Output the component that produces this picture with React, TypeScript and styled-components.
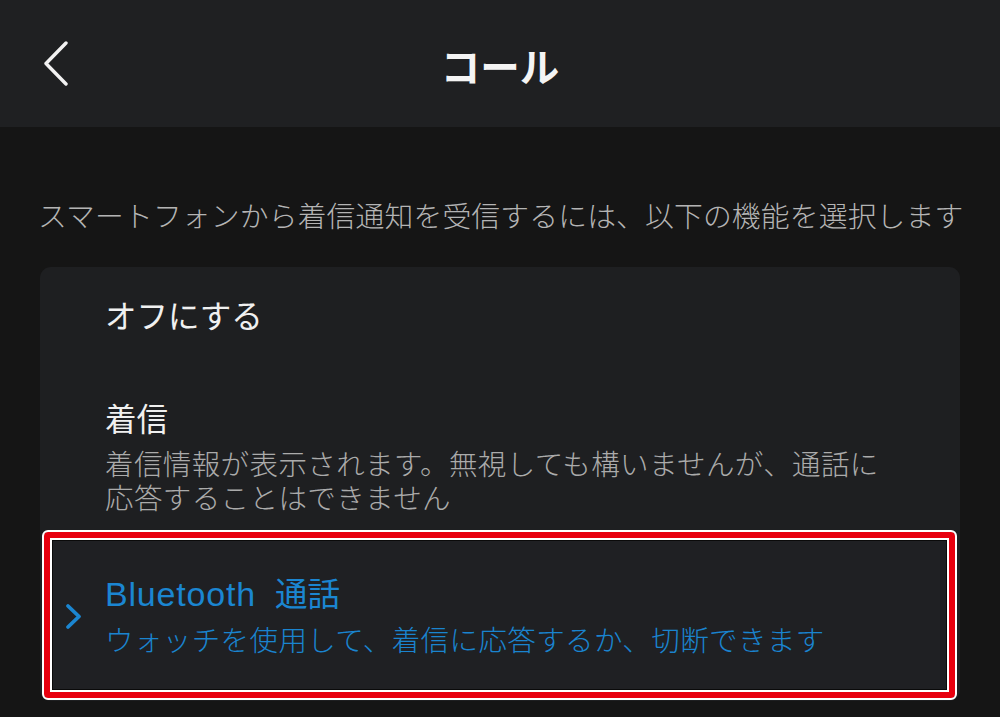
import React from "react";
import styled, { createGlobalStyle } from "styled-components";

const Global = createGlobalStyle`
  html, body { margin: 0; padding: 0; background: #151515; }
  body {
    font-family: "Noto Sans CJK JP", "Noto Sans", sans-serif;
    color: #f2f2f2;
    overflow: hidden;
    width: 1000px;
    height: 717px;
  }
`;

const Page = styled.div`
  width: 1000px;
  height: 717px;
  background: #151515;
  display: flex;
  flex-direction: column;
`;

const Header = styled.header`
  height: 127px;
  background: #1f2022;
  display: grid;
  grid-template-columns: 1fr auto 1fr;
  align-items: center;
`;

const BackButton = styled.button`
  justify-self: start;
  margin-left: 38px;
  padding: 0;
  background: none;
  border: none;
  width: 36px;
  height: 50px;
  display: flex;
  align-items: center;
  justify-content: center;
`;

const Title = styled.h1`
  margin: 0;
  font-size: 39.5px;
  font-weight: 700;
  color: #f4f4f4;
  line-height: 1;
  padding-top: 2px;
`;

const Main = styled.main`
  padding: 67px 40px 0 40px;
  display: flex;
  flex-direction: column;
`;

const Intro = styled.p`
  margin: 0 0 0 -2px;
  font-size: 28.8px;
  font-weight: 300;
  line-height: 42px;
  color: #b4b4b4;
  white-space: nowrap;
  letter-spacing: 0.15px;
`;

const Card = styled.section`
  margin-top: 31px;
  background: #1e1f21;
  border-radius: 11px;
  padding: 22px 3px 1px 2px;
  display: flex;
  flex-direction: column;
`;

const Option = styled.div<{ $gap?: number }>`
  padding-left: 63px;
  margin-bottom: ${(p) => p.$gap ?? 0}px;
  display: flex;
  flex-direction: column;
`;

const OptionTitle = styled.div<{ $spaced?: boolean }>`
  font-size: 31.5px;
  line-height: 50px;
  color: #f0f0f0;
  margin-bottom: ${(p) => (p.$spaced ? 4 : 0)}px;
`;

const BlueTitle = styled.div`
  font-size: 32.5px;
  line-height: 50px;
  color: #1b86d1;
  margin-bottom: 3px;
  display: flex;
  align-items: baseline;
`;

const Latin = styled.span`
  font-family: "Liberation Sans", sans-serif;
  font-size: 34px;
  letter-spacing: 0.8px;
  margin-right: 19px;
`;

const OptionDesc = styled.div<{ $blue?: boolean }>`
  font-size: 28.5px;
  font-weight: 300;
  line-height: 34px;
  color: ${(p) => (p.$blue ? "#1a84cf" : "#ababab")};
  letter-spacing: 0.4px;
`;

const DescLine = styled.span`
  display: block;
  white-space: nowrap;
`;

const Highlight = styled.div`
  height: 170px;
  box-sizing: border-box;
  border: 2px solid #ffffff;
  border-radius: 6px;
  box-shadow: inset 0 0 0 6px #e8000f, inset 0 0 0 8px #ffffff,
    inset 0 0 0 9px #0a0a0a;
  background: #1f2023;
  display: flex;
  align-items: center;
`;

const ChevronBox = styled.div`
  width: 61px;
  display: flex;
  justify-content: flex-start;
  padding-left: 21px;
  padding-top: 2px;
  box-sizing: border-box;
`;

const HighlightBody = styled.div`
  display: flex;
  flex-direction: column;
  margin-top: -8px;
`;

export default function App() {
  return (
    <Page>
      <Global />
      <Header>
        <BackButton aria-label="戻る">
          <svg width="30" height="46" viewBox="0 0 30 46">
            <path
              d="M25 2 L5 22.5 L25 43"
              fill="none"
              stroke="#f2f2f2"
              strokeWidth="3.4"
              strokeLinecap="round"
              strokeLinejoin="round"
            />
          </svg>
        </BackButton>
        <Title>コール</Title>
        <div />
      </Header>
      <Main>
        <Intro>スマートフォンから着信通知を受信するには、以下の機能を選択します</Intro>
        <Card>
          <Option $gap={53}>
            <OptionTitle>オフにする</OptionTitle>
          </Option>
          <Option $gap={16}>
            <OptionTitle $spaced>着信</OptionTitle>
            <OptionDesc>
              <DescLine>着信情報が表示されます。無視しても構いませんが、通話に</DescLine>
              <DescLine>応答することはできません</DescLine>
            </OptionDesc>
          </Option>
          <Highlight>
            <ChevronBox>
              <svg width="18" height="27" viewBox="0 0 18 27">
                <path
                  d="M3 3 L14 13.5 L3 24"
                  fill="none"
                  stroke="#1b86d1"
                  strokeWidth="3.8"
                  strokeLinecap="round"
                  strokeLinejoin="round"
                />
              </svg>
            </ChevronBox>
            <HighlightBody>
              <BlueTitle>
                <Latin>Bluetooth</Latin>
                <span>通話</span>
              </BlueTitle>
              <OptionDesc $blue>ウォッチを使用して、着信に応答するか、切断できます</OptionDesc>
            </HighlightBody>
          </Highlight>
        </Card>
      </Main>
    </Page>
  );
}
